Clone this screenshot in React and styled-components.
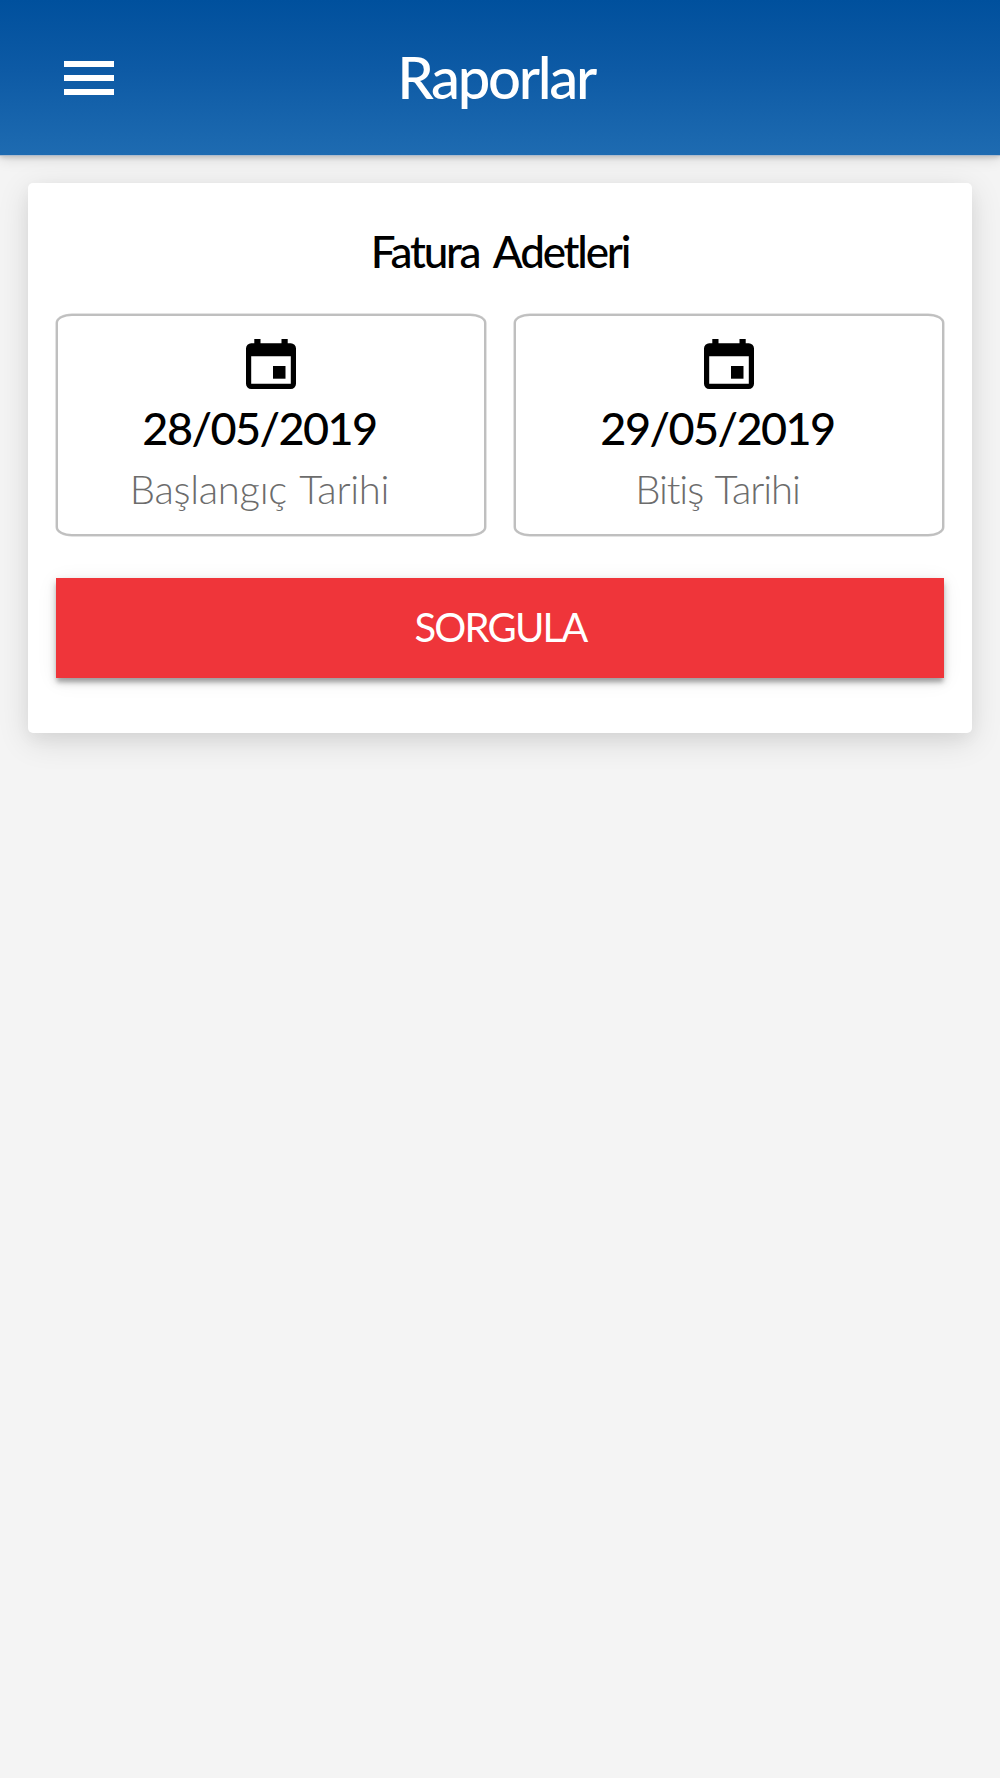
import React from "react";
import styled, { createGlobalStyle } from "styled-components";

const GlobalStyle = createGlobalStyle`
  * { box-sizing: border-box; }
  html, body { margin: 0; background: #f4f4f4; }
  body { font-family: Lato, "Liberation Sans", sans-serif; color: #000; }
`;

const Screen = styled.div`
  display: flex;
  flex-direction: column;
  min-height: 1778px;
`;

const Header = styled.header`
  display: grid;
  grid-template-columns: 114px 1fr 114px;
  align-items: center;
  height: 155px;
  background: linear-gradient(180deg, #00509d 0%, #0d5aa5 45%, #1e6bb1 100%);
  box-shadow: 0 1px 0 #aebccd, 0 2px 5px rgba(0, 0, 0, 0.18),
    0 3px 14px rgba(0, 0, 0, 0.14);
`;

const MenuButton = styled.button`
  display: flex;
  justify-content: flex-end;
  padding: 0;
  border: 0;
  background: none;
  color: #fff;
`;

const Title = styled.h1`
  margin: 0;
  padding: 0 8px 2px 0;
  text-align: center;
  font-size: 58px;
  line-height: 70px;
  font-weight: 500;
  letter-spacing: -2.3px;
  color: #fff;
`;

const Card = styled.main`
  display: flex;
  flex-direction: column;
  height: 550px;
  margin: 28px 28px 0;
  padding: 41px 28px 0;
  border-radius: 5px;
  background: #fff;
  box-shadow: 0 8px 32px rgba(0, 0, 0, 0.12), 0 6px 16px rgba(0, 0, 0, 0.04);
`;

const CardTitle = styled.h2`
  margin: 0;
  text-align: center;
  font-size: 44px;
  line-height: 54px;
  font-weight: 500;
  letter-spacing: -2.2px;
  word-spacing: 6px;
`;

const DateRow = styled.div`
  display: grid;
  grid-template-columns: 1fr 1fr;
  gap: 28px;
  margin-top: 36px;
`;

const DateBox = styled.button`
  display: flex;
  flex-direction: column;
  align-items: center;
  height: 222px;
  padding: 23px 0 0;
  border: 2px solid #bfbfbf;
  border-radius: 16px / 9px;
  background: #fff;
  box-shadow: 0 0 0 0.5px #c8c8c8;
  font-family: inherit;
  color: #000;
`;

const DateValue = styled.span`
  margin: 11px 23px 0 0;
  font-size: 45px;
  line-height: 56px;
  font-weight: 500;
  letter-spacing: -1.55px;
`;

const DateLabel = styled.span`
  margin: 6px 23px 0 0;
  font-size: 40px;
  line-height: 54px;
  font-weight: 300;
  letter-spacing: ${(p) => p.$tracking}px;
  word-spacing: 3px;
  color: #6c6c6c;
`;

const QueryButton = styled.button`
  height: 100px;
  margin-top: 42px;
  padding: 0 0 2px 1px;
  border: 0;
  background: #ef353a;
  color: #fff;
  font-family: inherit;
  font-size: 40px;
  font-weight: 400;
  letter-spacing: -1.8px;
  box-shadow: 0 5px 4px -1px rgba(0, 0, 0, 0.22), 0 4px 8px rgba(0, 0, 0, 0.2),
    0 3px 20px rgba(0, 0, 0, 0.07);
`;

const MenuIcon = () => (
  <svg width="50" height="34" viewBox="0 0 50 34" fill="currentColor">
    <path d="M0 0h50v6H0zM0 14h50v6H0zM0 28h50v6H0z" />
  </svg>
);

const CalendarIcon = () => (
  <svg width="50" height="50" viewBox="0 0 50 50" fill="currentColor">
    <path
      fillRule="evenodd"
      d="M8.3 0h6.2v4.3h21V0h6.2v4.3h3.1a5.2 5.2 0 0 1 5.2 5.2v35.3a5.2 5.2 0 0 1-5.2 5.2H5.2A5.2 5.2 0 0 1 0 44.8V9.5a5.2 5.2 0 0 1 5.2-5.2h3.1zM5.2 17.2v27.6h39.6V17.2z"
    />
    <path d="M27 27h12.5v12.7H27z" />
  </svg>
);

const DateField = ({ value, label, tracking }) => (
  <DateBox type="button">
    <CalendarIcon />
    <DateValue>{value}</DateValue>
    <DateLabel $tracking={tracking}>{label}</DateLabel>
  </DateBox>
);

export default function App() {
  return (
    <>
      <GlobalStyle />
      <Screen>
        <Header>
          <MenuButton type="button" aria-label="Menü">
            <MenuIcon />
          </MenuButton>
          <Title>Raporlar</Title>
        </Header>
        <Card>
          <CardTitle>Fatura Adetleri</CardTitle>
          <DateRow>
            <DateField value="28/05/2019" label="Başlangıç Tarihi" tracking={-0.3} />
            <DateField value="29/05/2019" label="Bitiş Tarihi" tracking={-1.1} />
          </DateRow>
          <QueryButton type="button">SORGULA</QueryButton>
        </Card>
      </Screen>
    </>
  );
}
